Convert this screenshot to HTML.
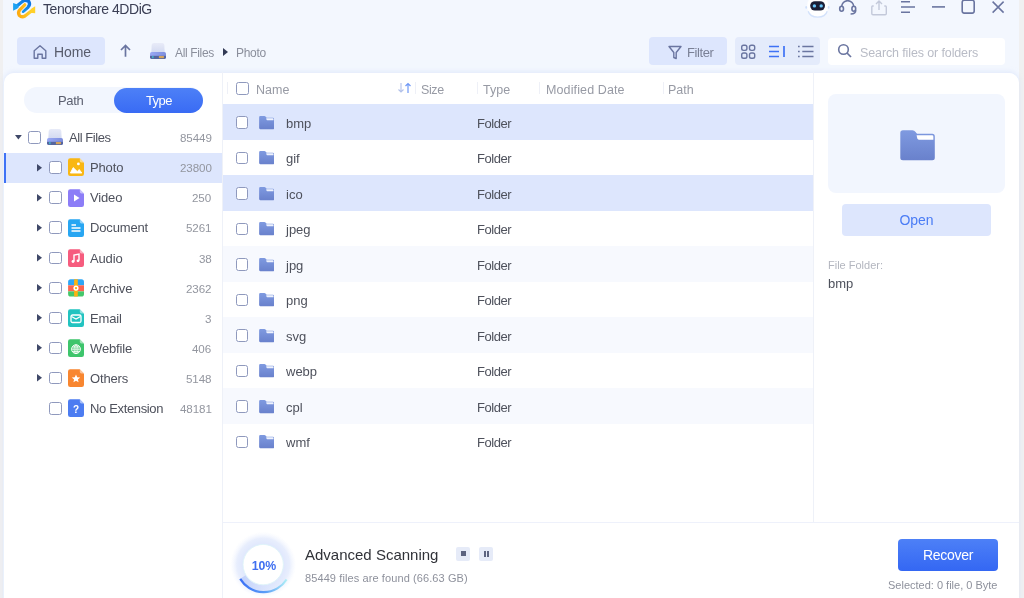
<!DOCTYPE html>
<html><head><meta charset="utf-8">
<style>
*{margin:0;padding:0;box-sizing:border-box}
html,body{width:1024px;height:598px;overflow:hidden;background:#f3f7fe;font-family:"Liberation Sans",sans-serif;}
.abs{position:absolute;white-space:nowrap;will-change:transform}
.btn{background:#dde6fd;border-radius:4px}
.crumb{font-size:12px;color:#8b8f9c;line-height:14px}
.panel{background:#fff}
.cb{position:absolute;width:12.5px;height:12.5px;border:1.3px solid #8f99bd;border-radius:2.5px;background:#fff}
.hdr{font-size:12.5px;color:#979aa4;line-height:15px;top:82.6px}
.sep{width:1px;height:12px;background:#eef0f7;top:82px}
</style></head>
<body>
<div class="abs" style="left:0;top:0;width:3px;height:598px;background:#f0f0f1"></div>
<div class="abs" style="left:1019px;top:0;width:5px;height:598px;background:#f0f0f1"></div>

<svg class="abs" style="left:8px;top:0" width="32" height="22" viewBox="8 0 32 22">
<defs>
<linearGradient id="lb" x1="0" y1="1" x2="1" y2="0"><stop offset="0" stop-color="#1ea2f2"/><stop offset="1" stop-color="#0a6fe0"/></linearGradient>
<linearGradient id="ly" x1="0" y1="0" x2="1" y2="0"><stop offset="0" stop-color="#fdab10"/><stop offset="1" stop-color="#ffd22e"/></linearGradient>
</defs>
<path d="M15.5 7 L22 2 Q26 -0.8 28.8 1.5 Q30.5 4.5 28 7.2 L23.2 11.3" stroke="url(#lb)" stroke-width="3.4" fill="none" stroke-linecap="round" stroke-linejoin="round"/>
<path d="M13.1 3.1 L17.5 4.6 L19 7.8 L13.1 10.7 Z" fill="#1ea2f2"/>
<path d="M24.8 4.8 L19.8 9.8 Q17.6 12.5 19.3 15.3 Q21.8 17.9 25 16 L32 10.5" stroke="#f2f6fe" stroke-width="5" fill="none" stroke-linecap="round" stroke-linejoin="round"/>
<path d="M24.8 4.8 L19.8 9.8 Q17.6 12.5 19.3 15.3 Q21.8 17.9 25 16 L32 10.5" stroke="url(#ly)" stroke-width="3.3" fill="none" stroke-linecap="round" stroke-linejoin="round"/>
<path d="M35.2 6.3 L35.2 13.2 L30 12.8 L31.5 8.5 Z" fill="#ffd02a"/>
</svg>
<div class="abs" style="left:42.5px;top:0.9px;font-size:14px;color:#3b3f55;line-height:17px;letter-spacing:-0.45px">Tenorshare 4DDiG</div>

<svg class="abs" style="left:800px;top:0" width="220" height="22" viewBox="800 0 220 22">
<defs><radialGradient id="rb" cx="0.5" cy="0.4" r="0.5"><stop offset="0.7" stop-color="#ffffff"/><stop offset="1" stop-color="#dbe8fd" stop-opacity="0"/></radialGradient></defs>
<radialGradient id="rbw" cx="817.7" cy="6" r="11.5" gradientUnits="userSpaceOnUse"><stop offset="0.85" stop-color="#ffffff"/><stop offset="1" stop-color="#ffffff" stop-opacity="0"/></radialGradient>
<circle cx="817.7" cy="6" r="11.5" fill="url(#rbw)"/>
<path d="M808.2 11.2 Q809.8 16.9 817.7 17.2 Q825.6 16.9 827.2 11.2" stroke="#d3e2fb" stroke-width="1.3" fill="none"/>
<ellipse cx="806.2" cy="7.4" rx="0.9" ry="1.3" fill="#cfe0fb"/><ellipse cx="828.6" cy="7.4" rx="0.9" ry="1.3" fill="#cfe0fb"/>
<rect x="810.2" y="1.2" width="14.8" height="9.3" rx="4.65" fill="#1a1f36"/>
<circle cx="814.4" cy="5.9" r="1.7" fill="#6cc8fb"/><circle cx="821.2" cy="5.9" r="1.7" fill="#6cc8fb"/>
<path d="M841.6 7 A6.1 6.3 0 0 1 853.8 7" stroke="#6a75a0" stroke-width="1.6" fill="none"/>
<ellipse cx="841.6" cy="8.8" rx="1.9" ry="2.5" stroke="#6a75a0" stroke-width="1.6" fill="none"/>
<ellipse cx="853.8" cy="8.8" rx="1.9" ry="2.5" stroke="#6a75a0" stroke-width="1.6" fill="none"/>
<path d="M855.6 10 Q856.2 13.8 850.6 14" stroke="#6a75a0" stroke-width="1.6" fill="none"/>
<path d="M873.7 6 H872.5 Q871.8 6 871.8 7 V13.5 Q871.8 14.7 873 14.7 H885.2 Q886.3 14.7 886.3 13.5 V7 Q886.3 6 885.5 6 H884.3 M879 10 V1 M876 4 L879 1 L882 4" stroke="#c3c9da" stroke-width="1.4" fill="none"/>
<path d="M901 1.8 H910 M901 7 H915 M901 12.2 H910" stroke="#6a75a0" stroke-width="1.5"/>
<path d="M932 6.9 H945" stroke="#6a75a0" stroke-width="1.6"/>
<rect x="962.2" y="0.3" width="12" height="12.8" rx="2" stroke="#6a75a0" stroke-width="1.6" fill="none"/>
<path d="M992.6 1.6 L1003.6 12.6 M1003.6 1.6 L992.6 12.6" stroke="#6a75a0" stroke-width="1.5"/>
</svg>

<div class="abs btn" style="left:17px;top:37px;width:87.5px;height:28px"></div>
<svg class="abs" style="left:32px;top:44px" width="16" height="16" viewBox="0 0 16 16">
<path d="M2.2 6.8 L8 1.8 L13.8 6.8 V14.3 H10.2 V10.3 H5.8 V14.3 H2.2 Z" stroke="#6a75a0" stroke-width="1.4" fill="none" stroke-linejoin="round"/>
</svg>
<div class="abs" style="left:54px;top:44px;font-size:14px;color:#575b6b;line-height:17px;letter-spacing:-0.1px">Home</div>
<svg class="abs" style="left:119px;top:44px" width="13" height="14" viewBox="0 0 13 14">
<path d="M6.5 12.8 V1.5 M2 6 L6.5 1.5 L11 6" stroke="#6a75a0" stroke-width="1.7" fill="none"/>
</svg>
<svg class="abs" style="left:150px;top:43.3px" width="16" height="16" viewBox="0 0 16 16">
<defs><linearGradient id="dt1" x1="0" y1="0" x2="0" y2="1"><stop offset="0" stop-color="#e8ebf8"/><stop offset="1" stop-color="#d3daf1"/></linearGradient>
<linearGradient id="db1" x1="0" y1="0" x2="1" y2="0"><stop offset="0" stop-color="#9aa9f5"/><stop offset="1" stop-color="#7d8ddc"/></linearGradient>
<clipPath id="dc1"><rect x="0" y="9" width="16" height="7" rx="1.8"/></clipPath></defs>
<path d="M1.3 9.5 L1.7 2 Q1.9 0 3.9 0 H12.1 Q14.1 0 14.3 2 L14.7 9.5 Z" fill="url(#dt1)"/>
<g clip-path="url(#dc1)"><rect x="0" y="9" width="16" height="7" fill="url(#db1)"/>
<rect x="0" y="12.8" width="16" height="3.2" fill="#56669e"/></g>
<rect x="2.2" y="13" width="1.3" height="2.2" fill="#3ebcd0"/>
<rect x="8.9" y="13" width="5" height="2.2" fill="#d4a35c"/>
</svg>
<div class="abs crumb" style="left:175px;top:45.5px;letter-spacing:-0.35px">All Files</div>
<svg class="abs" style="left:223px;top:47.8px" width="6" height="9" viewBox="0 0 6 9"><path d="M0 0 L5 4 L0 8 Z" fill="#323a55"/></svg>
<div class="abs crumb" style="left:236px;top:45.5px;letter-spacing:-0.3px">Photo</div>

<div class="abs btn" style="left:649.3px;top:37.3px;width:77.7px;height:28px"></div>
<svg class="abs" style="left:668px;top:44.5px" width="14" height="15" viewBox="0 0 14 15">
<path d="M1 1.5 H13 L8.2 7.5 V13.5 L5.8 12.5 V7.5 Z" stroke="#6a75a0" stroke-width="1.4" fill="none" stroke-linejoin="round"/>
</svg>
<div class="abs" style="left:686.8px;top:44.5px;font-size:13px;color:#7a8096;line-height:15px;letter-spacing:-0.4px">Filter</div>
<div class="abs btn" style="left:734.6px;top:37.3px;width:84.6px;height:28px;background:#e4ebfb"></div>
<svg class="abs" style="left:740px;top:43px" width="80" height="16" viewBox="0 0 80 16">
<rect x="1.7" y="2.2" width="5.2" height="5.2" rx="1.8" stroke="#6a75a0" stroke-width="1.4" fill="none"/>
<rect x="9.5" y="2.2" width="5.2" height="5.2" rx="1.8" stroke="#6a75a0" stroke-width="1.4" fill="none"/>
<rect x="1.7" y="10" width="5.2" height="5.2" rx="1.8" stroke="#6a75a0" stroke-width="1.4" fill="none"/>
<rect x="9.5" y="10" width="5.2" height="5.2" rx="1.8" stroke="#6a75a0" stroke-width="1.4" fill="none"/>
<path d="M29 3.5 H39 M29 8.5 H39 M29 13.5 H39 M44 3 V14" stroke="#3f72f5" stroke-width="1.7"/>
<path d="M58 3.5 H59.7 M58 8.5 H59.7 M58 13.5 H59.7 M62.3 3.5 H73.5 M62.3 8.5 H73.5 M62.3 13.5 H73.5" stroke="#6a75a0" stroke-width="1.7"/>
</svg>
<div class="abs" style="left:828px;top:37.6px;width:177px;height:27px;background:#fff;border-radius:4px"></div>
<svg class="abs" style="left:837px;top:43px" width="16" height="16" viewBox="0 0 16 16">
<circle cx="6.5" cy="6.5" r="4.8" stroke="#6a75a0" stroke-width="1.6" fill="none"/>
<path d="M10 10 L14 14" stroke="#6a75a0" stroke-width="1.7"/>
</svg>
<div class="abs" style="left:859.5px;top:45.8px;font-size:12.5px;color:#b9bcc6;line-height:15px;letter-spacing:-0.12px">Search files or folders</div>

<div class="abs" style="left:4px;top:72.5px;width:1015px;height:530px;border-radius:10px 10px 0 0;box-shadow:0 -1px 5px rgba(205,218,248,0.55)"></div>
<div class="abs panel" style="left:4px;top:72.5px;width:219px;height:530px;border-radius:10px 0 0 0"></div>
<div class="abs" style="left:24px;top:87px;width:179px;height:26.4px;background:#f2f6fe;border-radius:13.2px"></div>
<div class="abs" style="left:114px;top:87.5px;width:89px;height:25px;background:linear-gradient(#4d80f7,#396bf4);border-radius:12.5px"></div>
<div class="abs" style="left:57.5px;top:92.5px;font-size:13px;color:#5c6070;line-height:15px;letter-spacing:-0.35px">Path</div>
<div class="abs" style="left:145.6px;top:92.8px;font-size:13px;color:#fff;line-height:15px;letter-spacing:-0.6px">Type</div>

<svg class="abs" style="left:15px;top:134.6px" width="8" height="6" viewBox="0 0 8 6"><path d="M0 0 L6.8 0 L3.4 4.6 Z" fill="#3f4868"/></svg>
<div class="cb" style="left:28px;top:131px"></div>
<svg class="abs" style="left:47px;top:129px" width="16" height="16" viewBox="0 0 16 16">
<defs><linearGradient id="dt2" x1="0" y1="0" x2="0" y2="1"><stop offset="0" stop-color="#e8ebf8"/><stop offset="1" stop-color="#d3daf1"/></linearGradient>
<linearGradient id="db2" x1="0" y1="0" x2="1" y2="0"><stop offset="0" stop-color="#9aa9f5"/><stop offset="1" stop-color="#7d8ddc"/></linearGradient>
<clipPath id="dc2"><rect x="0" y="9" width="16" height="7" rx="1.8"/></clipPath></defs>
<path d="M1.3 9.5 L1.7 2 Q1.9 0 3.9 0 H12.1 Q14.1 0 14.3 2 L14.7 9.5 Z" fill="url(#dt2)"/>
<g clip-path="url(#dc2)"><rect x="0" y="9" width="16" height="7" fill="url(#db2)"/>
<rect x="0" y="12.8" width="16" height="3.2" fill="#56669e"/></g>
<rect x="2.2" y="13" width="1.3" height="2.2" fill="#3ebcd0"/>
<rect x="8.9" y="13" width="5" height="2.2" fill="#d4a35c"/>
</svg>
<div class="abs" style="left:69px;top:130px;font-size:13px;color:#4e515c;line-height:16px;letter-spacing:-0.45px">All Files</div>
<div class="abs" style="right:812.6px;top:131.2px;font-size:11.6px;color:#93969f;line-height:14px;letter-spacing:-0.1px">85449</div>
<div class="abs" style="left:4px;top:152.5px;width:219px;height:30px;background:#dde6fd"></div>
<div class="abs" style="left:4px;top:152.5px;width:2px;height:30px;background:#3f72f5"></div>
<svg class="abs" style="left:36.8px;top:163.6px" width="6" height="8" viewBox="0 0 6 8"><path d="M0 0 L5 3.75 L0 7.5 Z" fill="#3f4868"/></svg>
<div class="cb" style="left:49px;top:161.2px"></div>
<svg class="abs" style="left:68px;top:158.4px" width="16" height="18" viewBox="0 0 16 18">
<path d="M2.2 0.2 H11.8 L16 4.4 V15.8 Q16 18 13.8 18 H2.2 Q0 18 0 15.8 V2.4 Q0 0.2 2.2 0.2 Z" fill="#f9b714"/>
<path d="M11.8 0.2 V2.8 Q11.8 4.4 13.4 4.4 H16 Z" fill="#ffffff" opacity="0.5"/>
<path d="M2.4 15 L5.2 9.6 L9.3 13.6 L11.2 11.5 L13.8 15 Z" fill="#fff" stroke="#fff" stroke-width="0.9" stroke-linejoin="round"/><circle cx="10.4" cy="5.9" r="1.4" fill="#fff"/></svg>
<div class="abs" style="left:90px;top:160.2px;font-size:13px;color:#4e515c;line-height:16px;letter-spacing:-0.15px">Photo</div>
<div class="abs" style="right:812.6px;top:161.2px;font-size:11.6px;color:#93969f;line-height:14px;letter-spacing:-0.1px">23800</div>
<svg class="abs" style="left:36.8px;top:193.7px" width="6" height="8" viewBox="0 0 6 8"><path d="M0 0 L5 3.75 L0 7.5 Z" fill="#3f4868"/></svg>
<div class="cb" style="left:49px;top:191.3px"></div>
<svg class="abs" style="left:68px;top:188.5px" width="16" height="18" viewBox="0 0 16 18">
<path d="M2.2 0.2 H11.8 L16 4.4 V15.8 Q16 18 13.8 18 H2.2 Q0 18 0 15.8 V2.4 Q0 0.2 2.2 0.2 Z" fill="#8c7df7"/>
<path d="M11.8 0.2 V2.8 Q11.8 4.4 13.4 4.4 H16 Z" fill="#ffffff" opacity="0.5"/>
<path d="M6 5.5 L11.5 9 L6 12.5 Z" fill="#fff"/></svg>
<div class="abs" style="left:90px;top:190.3px;font-size:13px;color:#4e515c;line-height:16px;letter-spacing:-0.15px">Video</div>
<div class="abs" style="right:812.6px;top:191.3px;font-size:11.6px;color:#93969f;line-height:14px;letter-spacing:-0.1px">250</div>
<svg class="abs" style="left:36.8px;top:223.8px" width="6" height="8" viewBox="0 0 6 8"><path d="M0 0 L5 3.75 L0 7.5 Z" fill="#3f4868"/></svg>
<div class="cb" style="left:49px;top:221.4px"></div>
<svg class="abs" style="left:68px;top:218.6px" width="16" height="18" viewBox="0 0 16 18">
<path d="M2.2 0.2 H11.8 L16 4.4 V15.8 Q16 18 13.8 18 H2.2 Q0 18 0 15.8 V2.4 Q0 0.2 2.2 0.2 Z" fill="#28a6f2"/>
<path d="M11.8 0.2 V2.8 Q11.8 4.4 13.4 4.4 H16 Z" fill="#ffffff" opacity="0.5"/>
<path d="M3.5 6 H8 M3.5 9 H12.5 M3.5 12 H12.5" stroke="#fff" stroke-width="1.4"/></svg>
<div class="abs" style="left:90px;top:220.4px;font-size:13px;color:#4e515c;line-height:16px;letter-spacing:-0.15px">Document</div>
<div class="abs" style="right:812.6px;top:221.4px;font-size:11.6px;color:#93969f;line-height:14px;letter-spacing:-0.1px">5261</div>
<svg class="abs" style="left:36.8px;top:253.9px" width="6" height="8" viewBox="0 0 6 8"><path d="M0 0 L5 3.75 L0 7.5 Z" fill="#3f4868"/></svg>
<div class="cb" style="left:49px;top:251.5px"></div>
<svg class="abs" style="left:68px;top:248.7px" width="16" height="18" viewBox="0 0 16 18">
<path d="M2.2 0.2 H11.8 L16 4.4 V15.8 Q16 18 13.8 18 H2.2 Q0 18 0 15.8 V2.4 Q0 0.2 2.2 0.2 Z" fill="#f65c7e"/>
<path d="M11.8 0.2 V2.8 Q11.8 4.4 13.4 4.4 H16 Z" fill="#ffffff" opacity="0.5"/>
<path d="M6 12.5 V6 L11 5 V11.5" stroke="#fff" stroke-width="1.4" fill="none"/><circle cx="5" cy="12.5" r="1.4" fill="#fff"/><circle cx="10" cy="11.8" r="1.4" fill="#fff"/></svg>
<div class="abs" style="left:90px;top:250.5px;font-size:13px;color:#4e515c;line-height:16px;letter-spacing:-0.15px">Audio</div>
<div class="abs" style="right:812.6px;top:251.5px;font-size:11.6px;color:#93969f;line-height:14px;letter-spacing:-0.1px">38</div>
<svg class="abs" style="left:36.8px;top:284.0px" width="6" height="8" viewBox="0 0 6 8"><path d="M0 0 L5 3.75 L0 7.5 Z" fill="#3f4868"/></svg>
<div class="cb" style="left:49px;top:281.6px"></div>
<svg class="abs" style="left:68px;top:278.8px" width="16" height="18" viewBox="0 0 16 18">
<clipPath id="arc"><rect x="0.1" y="0.3" width="15.9" height="17.3" rx="2.6"/></clipPath>
<g clip-path="url(#arc)">
<rect x="0" y="0" width="16" height="6.3" fill="#2ea6f5"/>
<rect x="0" y="6.3" width="16" height="6.1" fill="#fb6450"/>
<rect x="0" y="12.4" width="16" height="6" fill="#44c86b"/>
<rect x="6.1" y="0" width="3.7" height="18" fill="#fbb213"/>
<circle cx="8" cy="9.1" r="2.6" fill="#fff"/>
<circle cx="8" cy="9.1" r="1.2" fill="#fbb213"/>
</g></svg>
<div class="abs" style="left:90px;top:280.6px;font-size:13px;color:#4e515c;line-height:16px;letter-spacing:-0.15px">Archive</div>
<div class="abs" style="right:812.6px;top:281.6px;font-size:11.6px;color:#93969f;line-height:14px;letter-spacing:-0.1px">2362</div>
<svg class="abs" style="left:36.8px;top:314.1px" width="6" height="8" viewBox="0 0 6 8"><path d="M0 0 L5 3.75 L0 7.5 Z" fill="#3f4868"/></svg>
<div class="cb" style="left:49px;top:311.7px"></div>
<svg class="abs" style="left:68px;top:308.9px" width="16" height="18" viewBox="0 0 16 18">
<path d="M2.2 0.2 H11.8 L16 4.4 V15.8 Q16 18 13.8 18 H2.2 Q0 18 0 15.8 V2.4 Q0 0.2 2.2 0.2 Z" fill="#22c3c0"/>
<path d="M11.8 0.2 V2.8 Q11.8 4.4 13.4 4.4 H16 Z" fill="#ffffff" opacity="0.5"/>
<rect x="3" y="6" width="10" height="7.5" rx="1.5" stroke="#fff" stroke-width="1.3" fill="none"/><path d="M3.5 7.5 L8 10 L12.5 7.5" stroke="#fff" stroke-width="1.3" fill="none"/></svg>
<div class="abs" style="left:90px;top:310.7px;font-size:13px;color:#4e515c;line-height:16px;letter-spacing:-0.15px">Email</div>
<div class="abs" style="right:812.6px;top:311.7px;font-size:11.6px;color:#93969f;line-height:14px;letter-spacing:-0.1px">3</div>
<svg class="abs" style="left:36.8px;top:344.2px" width="6" height="8" viewBox="0 0 6 8"><path d="M0 0 L5 3.75 L0 7.5 Z" fill="#3f4868"/></svg>
<div class="cb" style="left:49px;top:341.8px"></div>
<svg class="abs" style="left:68px;top:339.0px" width="16" height="18" viewBox="0 0 16 18">
<path d="M2.2 0.2 H11.8 L16 4.4 V15.8 Q16 18 13.8 18 H2.2 Q0 18 0 15.8 V2.4 Q0 0.2 2.2 0.2 Z" fill="#3ec56c"/>
<path d="M11.8 0.2 V2.8 Q11.8 4.4 13.4 4.4 H16 Z" fill="#ffffff" opacity="0.5"/>
<circle cx="8" cy="10.2" r="4.4" stroke="#fff" stroke-width="1" fill="none"/><path d="M3.6 10.2 H12.4 M4.2 8 H11.8 M4.2 12.4 H11.8 M8 5.8 V14.6" stroke="#fff" stroke-width="0.8" fill="none"/><ellipse cx="8" cy="10.2" rx="2" ry="4.4" stroke="#fff" stroke-width="0.8" fill="none"/></svg>
<div class="abs" style="left:90px;top:340.8px;font-size:13px;color:#4e515c;line-height:16px;letter-spacing:-0.15px">Webfile</div>
<div class="abs" style="right:812.6px;top:341.8px;font-size:11.6px;color:#93969f;line-height:14px;letter-spacing:-0.1px">406</div>
<svg class="abs" style="left:36.8px;top:374.3px" width="6" height="8" viewBox="0 0 6 8"><path d="M0 0 L5 3.75 L0 7.5 Z" fill="#3f4868"/></svg>
<div class="cb" style="left:49px;top:371.9px"></div>
<svg class="abs" style="left:68px;top:369.1px" width="16" height="18" viewBox="0 0 16 18">
<path d="M2.2 0.2 H11.8 L16 4.4 V15.8 Q16 18 13.8 18 H2.2 Q0 18 0 15.8 V2.4 Q0 0.2 2.2 0.2 Z" fill="#f88630"/>
<path d="M11.8 0.2 V2.8 Q11.8 4.4 13.4 4.4 H16 Z" fill="#ffffff" opacity="0.5"/>
<path d="M8 5.5 L9.2 8.3 L12.2 8.5 L9.9 10.4 L10.6 13.3 L8 11.7 L5.4 13.3 L6.1 10.4 L3.8 8.5 L6.8 8.3 Z" fill="#fff"/></svg>
<div class="abs" style="left:90px;top:370.9px;font-size:13px;color:#4e515c;line-height:16px;letter-spacing:-0.15px">Others</div>
<div class="abs" style="right:812.6px;top:371.9px;font-size:11.6px;color:#93969f;line-height:14px;letter-spacing:-0.1px">5148</div>
<div class="cb" style="left:49px;top:402.0px"></div>
<svg class="abs" style="left:68px;top:399.2px" width="16" height="18" viewBox="0 0 16 18">
<path d="M2.2 0.2 H11.8 L16 4.4 V15.8 Q16 18 13.8 18 H2.2 Q0 18 0 15.8 V2.4 Q0 0.2 2.2 0.2 Z" fill="#4c7cf1"/>
<path d="M11.8 0.2 V2.8 Q11.8 4.4 13.4 4.4 H16 Z" fill="#ffffff" opacity="0.5"/>
<text x="8" y="13.5" font-size="10" font-weight="bold" fill="#fff" text-anchor="middle" font-family="Liberation Sans">?</text></svg>
<div class="abs" style="left:90px;top:401.0px;font-size:13px;color:#4e515c;line-height:16px;letter-spacing:-0.35px">No Extension</div>
<div class="abs" style="right:812.6px;top:402.0px;font-size:11.6px;color:#93969f;line-height:14px;letter-spacing:-0.1px">48181</div>
<div class="abs panel" style="left:223px;top:72.5px;width:590px;height:450px"></div>
<div class="abs" style="left:222px;top:72px;width:1px;height:530px;background:#eef1f8"></div>
<div class="abs sep" style="left:227px"></div>
<div class="cb" style="left:236.3px;top:82.2px"></div>
<div class="abs hdr" style="left:256px">Name</div>
<svg class="abs" style="left:397px;top:82px" width="16" height="12" viewBox="0 0 16 12"><path d="M4 1 V10 M1.5 7.5 L4 10 L6.5 7.5" stroke="#b3c2ea" stroke-width="1.1" fill="none"/><path d="M11 11 V1.5 M8.5 4 L11 1.5 L13.5 4" stroke="#6f98f6" stroke-width="1.2" fill="none"/></svg>
<div class="abs sep" style="left:415px"></div>
<div class="abs hdr" style="left:420.5px;letter-spacing:-0.4px">Size</div>
<div class="abs sep" style="left:477px"></div>
<div class="abs hdr" style="left:483px">Type</div>
<div class="abs sep" style="left:539px"></div>
<div class="abs hdr" style="left:545.5px;letter-spacing:0.12px">Modified Date</div>
<div class="abs sep" style="left:663px"></div>
<div class="abs hdr" style="left:668px">Path</div>
<div class="abs" style="left:223px;top:104.0px;width:590px;height:35.5px;background:#dde6fd"></div>
<div class="cb" style="left:235.5px;top:116.0px"></div>
<svg class="abs" style="left:258.7px;top:115.8px" width="15.2" height="13.5" viewBox="0 0 35 31">
<defs><linearGradient id="fg" x1="0" y1="0" x2="0" y2="1"><stop offset="0" stop-color="#7f9ae0"/><stop offset="1" stop-color="#6981cc"/></linearGradient></defs>
<path d="M3 0.2 H12.3 Q14.4 0.2 15.6 1.9 L16.3 2.9 Q17 3.8 18.3 3.8 H32.3 Q34.8 3.8 34.8 6.3 V27.8 Q34.8 30.3 32.3 30.3 H3 Q0.3 30.3 0.3 27.8 V2.9 Q0.3 0.2 3 0.2 Z" fill="url(#fg)"/>
<path d="M16.6 5.3 H32 Q33.4 5.3 33.4 6.7 V9.7 H18.8 Q17.8 9.7 17.3 8.6 Z" fill="#eef2fd"/>
</svg>
<div class="abs" style="left:285.6px;top:115.5px;font-size:13px;color:#4e515c;line-height:16px">bmp</div>
<div class="abs" style="left:477px;top:115.5px;font-size:13px;color:#4e515c;line-height:16px;letter-spacing:-0.45px">Folder</div>
<div class="abs" style="left:223px;top:139.5px;width:590px;height:35.5px;background:#ffffff"></div>
<div class="cb" style="left:235.5px;top:151.6px"></div>
<svg class="abs" style="left:258.7px;top:151.3px" width="15.2" height="13.5" viewBox="0 0 35 31">
<defs><linearGradient id="fg" x1="0" y1="0" x2="0" y2="1"><stop offset="0" stop-color="#7f9ae0"/><stop offset="1" stop-color="#6981cc"/></linearGradient></defs>
<path d="M3 0.2 H12.3 Q14.4 0.2 15.6 1.9 L16.3 2.9 Q17 3.8 18.3 3.8 H32.3 Q34.8 3.8 34.8 6.3 V27.8 Q34.8 30.3 32.3 30.3 H3 Q0.3 30.3 0.3 27.8 V2.9 Q0.3 0.2 3 0.2 Z" fill="url(#fg)"/>
<path d="M16.6 5.3 H32 Q33.4 5.3 33.4 6.7 V9.7 H18.8 Q17.8 9.7 17.3 8.6 Z" fill="#eef2fd"/>
</svg>
<div class="abs" style="left:285.6px;top:151.1px;font-size:13px;color:#4e515c;line-height:16px">gif</div>
<div class="abs" style="left:477px;top:151.1px;font-size:13px;color:#4e515c;line-height:16px;letter-spacing:-0.45px">Folder</div>
<div class="abs" style="left:223px;top:175.0px;width:590px;height:35.5px;background:#dde6fd"></div>
<div class="cb" style="left:235.5px;top:187.1px"></div>
<svg class="abs" style="left:258.7px;top:186.8px" width="15.2" height="13.5" viewBox="0 0 35 31">
<defs><linearGradient id="fg" x1="0" y1="0" x2="0" y2="1"><stop offset="0" stop-color="#7f9ae0"/><stop offset="1" stop-color="#6981cc"/></linearGradient></defs>
<path d="M3 0.2 H12.3 Q14.4 0.2 15.6 1.9 L16.3 2.9 Q17 3.8 18.3 3.8 H32.3 Q34.8 3.8 34.8 6.3 V27.8 Q34.8 30.3 32.3 30.3 H3 Q0.3 30.3 0.3 27.8 V2.9 Q0.3 0.2 3 0.2 Z" fill="url(#fg)"/>
<path d="M16.6 5.3 H32 Q33.4 5.3 33.4 6.7 V9.7 H18.8 Q17.8 9.7 17.3 8.6 Z" fill="#eef2fd"/>
</svg>
<div class="abs" style="left:285.6px;top:186.6px;font-size:13px;color:#4e515c;line-height:16px">ico</div>
<div class="abs" style="left:477px;top:186.6px;font-size:13px;color:#4e515c;line-height:16px;letter-spacing:-0.45px">Folder</div>
<div class="abs" style="left:223px;top:210.5px;width:590px;height:35.5px;background:#ffffff"></div>
<div class="cb" style="left:235.5px;top:222.6px"></div>
<svg class="abs" style="left:258.7px;top:222.3px" width="15.2" height="13.5" viewBox="0 0 35 31">
<defs><linearGradient id="fg" x1="0" y1="0" x2="0" y2="1"><stop offset="0" stop-color="#7f9ae0"/><stop offset="1" stop-color="#6981cc"/></linearGradient></defs>
<path d="M3 0.2 H12.3 Q14.4 0.2 15.6 1.9 L16.3 2.9 Q17 3.8 18.3 3.8 H32.3 Q34.8 3.8 34.8 6.3 V27.8 Q34.8 30.3 32.3 30.3 H3 Q0.3 30.3 0.3 27.8 V2.9 Q0.3 0.2 3 0.2 Z" fill="url(#fg)"/>
<path d="M16.6 5.3 H32 Q33.4 5.3 33.4 6.7 V9.7 H18.8 Q17.8 9.7 17.3 8.6 Z" fill="#eef2fd"/>
</svg>
<div class="abs" style="left:285.6px;top:222.1px;font-size:13px;color:#4e515c;line-height:16px">jpeg</div>
<div class="abs" style="left:477px;top:222.1px;font-size:13px;color:#4e515c;line-height:16px;letter-spacing:-0.45px">Folder</div>
<div class="abs" style="left:223px;top:246.0px;width:590px;height:35.5px;background:#f7f9fe"></div>
<div class="cb" style="left:235.5px;top:258.1px"></div>
<svg class="abs" style="left:258.7px;top:257.9px" width="15.2" height="13.5" viewBox="0 0 35 31">
<defs><linearGradient id="fg" x1="0" y1="0" x2="0" y2="1"><stop offset="0" stop-color="#7f9ae0"/><stop offset="1" stop-color="#6981cc"/></linearGradient></defs>
<path d="M3 0.2 H12.3 Q14.4 0.2 15.6 1.9 L16.3 2.9 Q17 3.8 18.3 3.8 H32.3 Q34.8 3.8 34.8 6.3 V27.8 Q34.8 30.3 32.3 30.3 H3 Q0.3 30.3 0.3 27.8 V2.9 Q0.3 0.2 3 0.2 Z" fill="url(#fg)"/>
<path d="M16.6 5.3 H32 Q33.4 5.3 33.4 6.7 V9.7 H18.8 Q17.8 9.7 17.3 8.6 Z" fill="#eef2fd"/>
</svg>
<div class="abs" style="left:285.6px;top:257.6px;font-size:13px;color:#4e515c;line-height:16px">jpg</div>
<div class="abs" style="left:477px;top:257.6px;font-size:13px;color:#4e515c;line-height:16px;letter-spacing:-0.45px">Folder</div>
<div class="abs" style="left:223px;top:281.5px;width:590px;height:35.5px;background:#ffffff"></div>
<div class="cb" style="left:235.5px;top:293.6px"></div>
<svg class="abs" style="left:258.7px;top:293.4px" width="15.2" height="13.5" viewBox="0 0 35 31">
<defs><linearGradient id="fg" x1="0" y1="0" x2="0" y2="1"><stop offset="0" stop-color="#7f9ae0"/><stop offset="1" stop-color="#6981cc"/></linearGradient></defs>
<path d="M3 0.2 H12.3 Q14.4 0.2 15.6 1.9 L16.3 2.9 Q17 3.8 18.3 3.8 H32.3 Q34.8 3.8 34.8 6.3 V27.8 Q34.8 30.3 32.3 30.3 H3 Q0.3 30.3 0.3 27.8 V2.9 Q0.3 0.2 3 0.2 Z" fill="url(#fg)"/>
<path d="M16.6 5.3 H32 Q33.4 5.3 33.4 6.7 V9.7 H18.8 Q17.8 9.7 17.3 8.6 Z" fill="#eef2fd"/>
</svg>
<div class="abs" style="left:285.6px;top:293.1px;font-size:13px;color:#4e515c;line-height:16px">png</div>
<div class="abs" style="left:477px;top:293.1px;font-size:13px;color:#4e515c;line-height:16px;letter-spacing:-0.45px">Folder</div>
<div class="abs" style="left:223px;top:317.0px;width:590px;height:35.5px;background:#f7f9fe"></div>
<div class="cb" style="left:235.5px;top:329.1px"></div>
<svg class="abs" style="left:258.7px;top:328.9px" width="15.2" height="13.5" viewBox="0 0 35 31">
<defs><linearGradient id="fg" x1="0" y1="0" x2="0" y2="1"><stop offset="0" stop-color="#7f9ae0"/><stop offset="1" stop-color="#6981cc"/></linearGradient></defs>
<path d="M3 0.2 H12.3 Q14.4 0.2 15.6 1.9 L16.3 2.9 Q17 3.8 18.3 3.8 H32.3 Q34.8 3.8 34.8 6.3 V27.8 Q34.8 30.3 32.3 30.3 H3 Q0.3 30.3 0.3 27.8 V2.9 Q0.3 0.2 3 0.2 Z" fill="url(#fg)"/>
<path d="M16.6 5.3 H32 Q33.4 5.3 33.4 6.7 V9.7 H18.8 Q17.8 9.7 17.3 8.6 Z" fill="#eef2fd"/>
</svg>
<div class="abs" style="left:285.6px;top:328.6px;font-size:13px;color:#4e515c;line-height:16px">svg</div>
<div class="abs" style="left:477px;top:328.6px;font-size:13px;color:#4e515c;line-height:16px;letter-spacing:-0.45px">Folder</div>
<div class="abs" style="left:223px;top:352.5px;width:590px;height:35.5px;background:#ffffff"></div>
<div class="cb" style="left:235.5px;top:364.6px"></div>
<svg class="abs" style="left:258.7px;top:364.4px" width="15.2" height="13.5" viewBox="0 0 35 31">
<defs><linearGradient id="fg" x1="0" y1="0" x2="0" y2="1"><stop offset="0" stop-color="#7f9ae0"/><stop offset="1" stop-color="#6981cc"/></linearGradient></defs>
<path d="M3 0.2 H12.3 Q14.4 0.2 15.6 1.9 L16.3 2.9 Q17 3.8 18.3 3.8 H32.3 Q34.8 3.8 34.8 6.3 V27.8 Q34.8 30.3 32.3 30.3 H3 Q0.3 30.3 0.3 27.8 V2.9 Q0.3 0.2 3 0.2 Z" fill="url(#fg)"/>
<path d="M16.6 5.3 H32 Q33.4 5.3 33.4 6.7 V9.7 H18.8 Q17.8 9.7 17.3 8.6 Z" fill="#eef2fd"/>
</svg>
<div class="abs" style="left:285.6px;top:364.1px;font-size:13px;color:#4e515c;line-height:16px">webp</div>
<div class="abs" style="left:477px;top:364.1px;font-size:13px;color:#4e515c;line-height:16px;letter-spacing:-0.45px">Folder</div>
<div class="abs" style="left:223px;top:388.0px;width:590px;height:35.5px;background:#f7f9fe"></div>
<div class="cb" style="left:235.5px;top:400.1px"></div>
<svg class="abs" style="left:258.7px;top:399.9px" width="15.2" height="13.5" viewBox="0 0 35 31">
<defs><linearGradient id="fg" x1="0" y1="0" x2="0" y2="1"><stop offset="0" stop-color="#7f9ae0"/><stop offset="1" stop-color="#6981cc"/></linearGradient></defs>
<path d="M3 0.2 H12.3 Q14.4 0.2 15.6 1.9 L16.3 2.9 Q17 3.8 18.3 3.8 H32.3 Q34.8 3.8 34.8 6.3 V27.8 Q34.8 30.3 32.3 30.3 H3 Q0.3 30.3 0.3 27.8 V2.9 Q0.3 0.2 3 0.2 Z" fill="url(#fg)"/>
<path d="M16.6 5.3 H32 Q33.4 5.3 33.4 6.7 V9.7 H18.8 Q17.8 9.7 17.3 8.6 Z" fill="#eef2fd"/>
</svg>
<div class="abs" style="left:285.6px;top:399.6px;font-size:13px;color:#4e515c;line-height:16px">cpl</div>
<div class="abs" style="left:477px;top:399.6px;font-size:13px;color:#4e515c;line-height:16px;letter-spacing:-0.45px">Folder</div>
<div class="abs" style="left:223px;top:423.5px;width:590px;height:35.5px;background:#ffffff"></div>
<div class="cb" style="left:235.5px;top:435.6px"></div>
<svg class="abs" style="left:258.7px;top:435.4px" width="15.2" height="13.5" viewBox="0 0 35 31">
<defs><linearGradient id="fg" x1="0" y1="0" x2="0" y2="1"><stop offset="0" stop-color="#7f9ae0"/><stop offset="1" stop-color="#6981cc"/></linearGradient></defs>
<path d="M3 0.2 H12.3 Q14.4 0.2 15.6 1.9 L16.3 2.9 Q17 3.8 18.3 3.8 H32.3 Q34.8 3.8 34.8 6.3 V27.8 Q34.8 30.3 32.3 30.3 H3 Q0.3 30.3 0.3 27.8 V2.9 Q0.3 0.2 3 0.2 Z" fill="url(#fg)"/>
<path d="M16.6 5.3 H32 Q33.4 5.3 33.4 6.7 V9.7 H18.8 Q17.8 9.7 17.3 8.6 Z" fill="#eef2fd"/>
</svg>
<div class="abs" style="left:285.6px;top:435.1px;font-size:13px;color:#4e515c;line-height:16px">wmf</div>
<div class="abs" style="left:477px;top:435.1px;font-size:13px;color:#4e515c;line-height:16px;letter-spacing:-0.45px">Folder</div>
<div class="abs panel" style="left:814px;top:72.5px;width:205px;height:450px;border-radius:0 10px 0 0"></div>
<div class="abs" style="left:813px;top:72px;width:1px;height:450px;background:#eef1f8"></div>
<div class="abs" style="left:828px;top:94px;width:177px;height:99px;background:#f2f6fe;border-radius:8px"></div>
<svg class="abs" style="left:899.7px;top:130.1px" width="35" height="31" viewBox="0 0 35 31">
<defs><linearGradient id="fg2" x1="0" y1="0" x2="0" y2="1"><stop offset="0" stop-color="#7f9ae0"/><stop offset="1" stop-color="#6981cc"/></linearGradient></defs>
<path d="M3 0.2 H12.3 Q14.4 0.2 15.6 1.9 L16.3 2.9 Q17 3.8 18.3 3.8 H32.3 Q34.8 3.8 34.8 6.3 V27.8 Q34.8 30.3 32.3 30.3 H3 Q0.3 30.3 0.3 27.8 V2.9 Q0.3 0.2 3 0.2 Z" fill="url(#fg2)"/>
<path d="M16.6 5.3 H32 Q33.4 5.3 33.4 6.7 V9.7 H18.8 Q17.8 9.7 17.3 8.6 Z" fill="#ffffff"/>
</svg>
<div class="abs btn" style="left:842px;top:204px;width:149px;height:32px"></div>
<div class="abs" style="left:842px;top:212px;width:149px;text-align:center;font-size:14px;color:#4a7cf5;line-height:16px">Open</div>
<div class="abs" style="left:828px;top:259px;font-size:11px;color:#b3b6bf;line-height:13px">File Folder:</div>
<div class="abs" style="left:828px;top:276px;font-size:13px;color:#4e515c;line-height:15px">bmp</div>
<div class="abs panel" style="left:223px;top:523px;width:796px;height:80px"></div>
<div class="abs" style="left:223px;top:522px;width:796px;height:1px;background:#eef1fb"></div>
<svg class="abs" style="left:228px;top:529px" width="72" height="69" viewBox="228 529 72 69">
<defs><radialGradient id="rg" cx="263.2" cy="564.6" r="33" gradientUnits="userSpaceOnUse"><stop offset="0.6" stop-color="#dfe7fd"/><stop offset="0.8" stop-color="#e8eefd"/><stop offset="1" stop-color="#f4f7ff" stop-opacity="0"/></radialGradient>
<linearGradient id="lg" x1="240" y1="0" x2="287" y2="0" gradientUnits="userSpaceOnUse"><stop offset="0" stop-color="#3a6ff5"/><stop offset="0.55" stop-color="#5b9ef7"/><stop offset="1" stop-color="#b0f0f6"/></linearGradient>
<linearGradient id="lg2" x1="240" y1="0" x2="287" y2="0" gradientUnits="userSpaceOnUse"><stop offset="0" stop-color="#c3d2fb"/><stop offset="1" stop-color="#e3ebfd" stop-opacity="0.3"/></linearGradient></defs>
<circle cx="263.2" cy="564.6" r="33" fill="url(#rg)"/>
<path d="M240.3 578.6 A27 27 0 0 0 286.1 578.6" stroke="url(#lg2)" stroke-width="7" fill="none" transform="translate(263.2 564.6) scale(0.88) translate(-263.2 -564.6)"/>
<circle cx="263.2" cy="564.6" r="20.2" fill="#fff" stroke="#dff4f8" stroke-width="0.9"/>
<path d="M240.2 578.9 A27.3 27.3 0 0 0 286.6 579.5" stroke="url(#lg)" stroke-width="2.2" fill="none"/>
</svg>
<div class="abs" style="left:233.5px;top:558.5px;width:60px;text-align:center;font-size:12.3px;font-weight:bold;color:#3f6ff0;line-height:15px">10%</div>
<div class="abs" style="left:305px;top:546px;font-size:15px;color:#303238;line-height:17px">Advanced Scanning</div>
<div class="abs" style="left:456px;top:547px;width:14px;height:14px;background:#e6ebf8;border-radius:2px"></div>
<div class="abs" style="left:461px;top:551.3px;width:5px;height:5px;background:#5d6480"></div>
<div class="abs" style="left:479px;top:547px;width:14px;height:14px;background:#e6ebf8;border-radius:2px"></div>
<div class="abs" style="left:483.6px;top:550.8px;width:1.9px;height:6px;background:#5d6480"></div>
<div class="abs" style="left:487.3px;top:550.8px;width:1.9px;height:6px;background:#5d6480"></div>
<div class="abs" style="left:305px;top:572px;font-size:11px;color:#8e919c;line-height:13px;letter-spacing:0.1px">85449 files are found (66.63 GB)</div>
<div class="abs" style="left:898px;top:539px;width:100px;height:32px;border-radius:4px;background:linear-gradient(#4d80f7,#3467f3)"></div>
<div class="abs" style="left:898px;top:547px;width:100px;text-align:center;font-size:14px;color:#fff;line-height:16px;letter-spacing:-0.3px">Recover</div>
<div class="abs" style="right:27px;top:579px;font-size:11px;color:#8e919c;line-height:13px">Selected: 0 file, 0 Byte</div>
</body></html>
